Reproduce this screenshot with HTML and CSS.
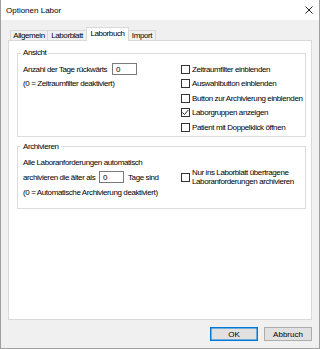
FILE: index.html
```html
<!DOCTYPE html>
<html lang="de">
<head>
  <meta charset="UTF-8">
  <title>Optionen Labor</title>
  <link rel="stylesheet" href="styles.css">
</head>
<body>
  <div class="window">
    <div class="titlebar">
      <span class="title">Optionen Labor</span>
      <svg class="close" width="8" height="8" viewBox="0 0 8 8">
        <path d="M0.5 0.5 L7.5 7.5 M7.5 0.5 L0.5 7.5" stroke="#222" stroke-width="1" fill="none"/>
      </svg>
    </div>

    <div class="content">
      <div class="tabs">
        <div class="tab tab-allg">Allgemein</div>
        <div class="tab tab-blatt">Laborblatt</div>
        <div class="tab tab-buch active">Laborbuch</div>
        <div class="tab tab-import">Import</div>
      </div>

      <div class="panel">
        <!-- Ansicht -->
        <fieldset class="group ansicht">
          <legend>Ansicht</legend>
          <div class="col-left">
            <div class="row">
              <span class="lbl lbl-tage">Anzahl der Tage rückwärts</span>
              <input class="num" type="text" value="0">
            </div>
            <div class="row">(0 = Zeitraumfilter deaktiviert)</div>
          </div>
          <div class="col-right">
            <label class="check"><span class="box"></span>Zeitraumfilter einblenden</label>
            <label class="check"><span class="box"></span>Auswahlbutton einblenden</label>
            <label class="check"><span class="box"></span>Button zur Archivierung einblenden</label>
            <label class="check"><span class="box">
              <svg width="7" height="7" viewBox="0 0 7 7"><polyline points="0.5,3.5 2.5,5.5 6.5,0.8" stroke="#333" stroke-width="1" fill="none"/></svg>
            </span>Laborgruppen anzeigen</label>
            <label class="check"><span class="box"></span>Patient mit Doppelklick öffnen</label>
          </div>
        </fieldset>

        <!-- Archivieren -->
        <fieldset class="group archiv">
          <legend>Archivieren</legend>
          <div class="col-left">
            <div class="row">Alle Laboranforderungen automatisch</div>
            <div class="row">
              <span class="lbl lbl-aelter">archivieren die älter als</span>
              <input class="num" type="text" value="0">
              <span class="after">Tage sind</span>
            </div>
            <div class="row">(0 = Automatische Archivierung deaktiviert)</div>
          </div>
          <div class="col-right">
            <label class="check multi"><span class="box"></span><span>Nur ins Laborblatt übertragene<br>Laboranforderungen archivieren</span></label>
          </div>
        </fieldset>
      </div>

      <div class="buttons">
        <button class="btn default">OK</button>
        <button class="btn">Abbruch</button>
      </div>
    </div>
  </div>
</body>
</html>
```

FILE: styles.css
```css
* {
  box-sizing: border-box;
}
body {
  margin: 0;
  font-family: "Liberation Sans", Arial, sans-serif;
  font-size: 8px;
  letter-spacing: -0.4px;
  color: #000;
}
.window {
  width: 320px;
  height: 349px;
  background-color: #f0f0f0;
  border: 1px solid #a0a0a0;
  border-top: none;
}
.titlebar {
  height: 20px;
  background-color: #fff;
  display: flex;
  align-items: center;
  justify-content: space-between;
  padding: 0 6px 0 5px;
}
.title {
  letter-spacing: 0;
}
.content {
  padding: 0 7px;
}

/* Tabs */
.tabs {
  height: 20px;
  display: flex;
  align-items: flex-end;
  padding-left: 2px;
}
.tab {
  height: 10px;
  line-height: 9px;
  border: 1px solid #d9d9d9;
  border-bottom: none;
  background-color: #f0f0f0;
  text-align: center;
  margin-left: -1px;
}
.tab-allg {
  width: 38px;
  margin-left: 0;
}
.tab-blatt {
  width: 40px;
}
.tab-buch {
  width: 43px;
}
.tab-import {
  width: 28px;
}
.tab.active {
  height: 14px;
  line-height: 12px;
  background-color: #fff;
  margin-bottom: -1px;
  position: relative;
  z-index: 1;
}

/* Panel */
.panel {
  height: 280px;
  background-color: #fff;
  border: 1px solid #d9d9d9;
  padding: 7px 5px 0 8px;
}
.group {
  margin: 0;
  border: 1px solid #dcdcdc;
  display: grid;
  grid-template-columns: 158px 1fr;
  min-width: 0;
}
.group legend {
  padding: 0 2px;
  margin-left: -2px;
  line-height: 10px;
}
.ansicht {
  padding: 4px 0 1px 5px;
}
.archiv {
  margin-top: 5px;
  padding: 3px 0 8px 5px;
}
.row {
  height: 14px;
  display: flex;
  align-items: center;
}
.archiv .row {
  height: 15px;
}
.lbl-tage {
  width: 89px;
}
.lbl-aelter {
  width: 76px;
}
.num {
  width: 25px;
  height: 12px;
  border: 1px solid #7a7a7a;
  padding: 0 0 0 3px;
  font: inherit;
  letter-spacing: 0;
  outline: none;
}
.after {
  margin-left: 4px;
}
.check {
  height: 14.5px;
  display: flex;
  align-items: center;
  gap: 2px;
}
.archiv .col-right {
  padding-top: 13px;
}
.check.multi {
  height: 19px;
  line-height: 9px;
}
.box {
  width: 9px;
  height: 9px;
  flex: none;
  border: 1px solid #333;
  background-color: #fff;
  display: flex;
  align-items: center;
  justify-content: center;
}

/* Buttons */
.buttons {
  display: flex;
  justify-content: flex-end;
  gap: 6px;
  margin-top: 7px;
}
.btn {
  width: 48px;
  height: 14px;
  padding: 0;
  font: inherit;
  letter-spacing: 0;
  color: #000;
  background-color: #e1e1e1;
  border: 1px solid #adadad;
}
.btn.default {
  border-color: #0078d7;
  box-shadow: inset 0 0 0 0.5px #0078d7;
}
```
